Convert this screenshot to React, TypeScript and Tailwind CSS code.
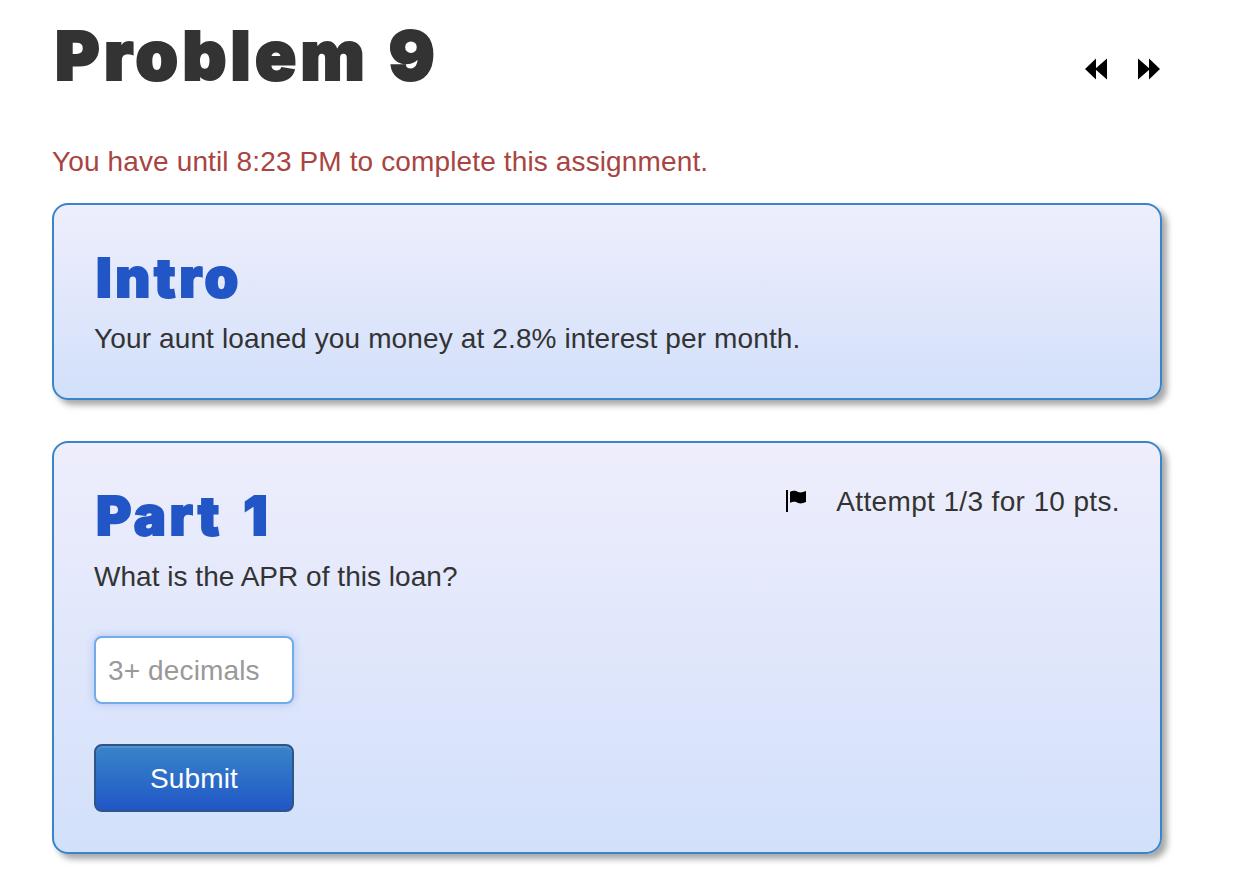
import React from "react";

const heading = "font-['Inter','Liberation_Sans',Arial,sans-serif] font-black";
const sub = `${heading} text-[#2256c6] text-[54px] leading-[70px] -mt-[2px] mb-[2px] tracking-[3.6px] [word-spacing:6px] [-webkit-text-stroke:1.8px_#2256c6] ml-[2px]`;
const card = "rounded-[16px] border-2 border-[#3a84c9] bg-gradient-to-b from-[#eeeefc] to-[#d2e0fa] shadow-[5px_5px_6px_rgba(0,0,0,0.35)] px-[40px] pt-[40px]";

function Rewind({ flip }: { flip?: boolean }) {
  return (
    <svg width="22" height="22" viewBox="0 0 22 22" className={flip ? "-scale-x-100" : ""} fill="#000">
      <path d="M0 11 L11 0.5 V21.5 Z" />
      <path d="M10 11 L22 0.5 V21.5 Z" />
    </svg>
  );
}

export default function App() {
  return (
    <div className="w-[1244px] h-[896px] overflow-hidden bg-white pl-[52px] pr-[82px] font-['Liberation_Sans',Arial,sans-serif] text-[28px] tracking-[0.13px] leading-[38px] text-[#333]">
      <div className="flex items-start justify-between h-[143px]">
        <h1 className={`${heading} ml-[3px] text-[68px] leading-[110px] tracking-[4.3px] [word-spacing:2px] text-[#333] [-webkit-text-stroke:2.2px_#333]`}>Problem 9</h1>
        <div className="flex gap-[31px] mt-[58px] mr-[2px]">
          <Rewind />
          <Rewind flip />
        </div>
      </div>
      <p className="text-[#a94442] h-[38px]">You have until 8:23 PM to complete this assignment.</p>
      <section className={`${card} mt-[22px] h-[197px]`}>
        <h2 className={sub}>Intro</h2>
        <p className="mt-[7px]">Your aunt loaned you money at 2.8% interest per month.</p>
      </section>
      <section className={`${card} mt-[41px] h-[413px]`}>
        <div className="flex items-start justify-between">
          <h2 className={sub}>Part 1</h2>
          <div className="flex items-start">
            <svg width="22" height="24" viewBox="0 0 22 24" className="mt-[7px] mr-[28px]">
              <rect x="0" y="0" width="2" height="22" fill="#000" />
              <path d="M4 2 C8 0 10 1 12 2 C15 3 17 2 20 1 V12 C17 13 15 14 12 13 C10 12 8 11 4 13 Z" fill="#000" />
            </svg>
            <span className="tracking-[0.36px]">Attempt 1/3 for 10 pts.</span>
          </div>
        </div>
        <p className="mt-[5px] tracking-[0.03px]">What is the APR of this loan?</p>
        <input
          readOnly
          placeholder="3+ decimals"
          className="block mt-[40px] w-[200px] h-[68px] rounded-[8px] border-2 border-[#72ace8] bg-white px-[12px] pt-[2px] text-[28px] placeholder:text-[#999] outline-none shadow-[0_0_8px_rgba(82,130,230,0.35)]"
        />
        <button className="block mt-[40px] w-[200px] h-[68px] rounded-[8px] border-2 border-[#2f5587] bg-gradient-to-b from-[#3a84c9] to-[#2256c6] pt-[2px] text-white text-[28px] shadow-[inset_0_2px_0_rgba(255,255,255,0.12)]">
          Submit
        </button>
      </section>
    </div>
  );
}
